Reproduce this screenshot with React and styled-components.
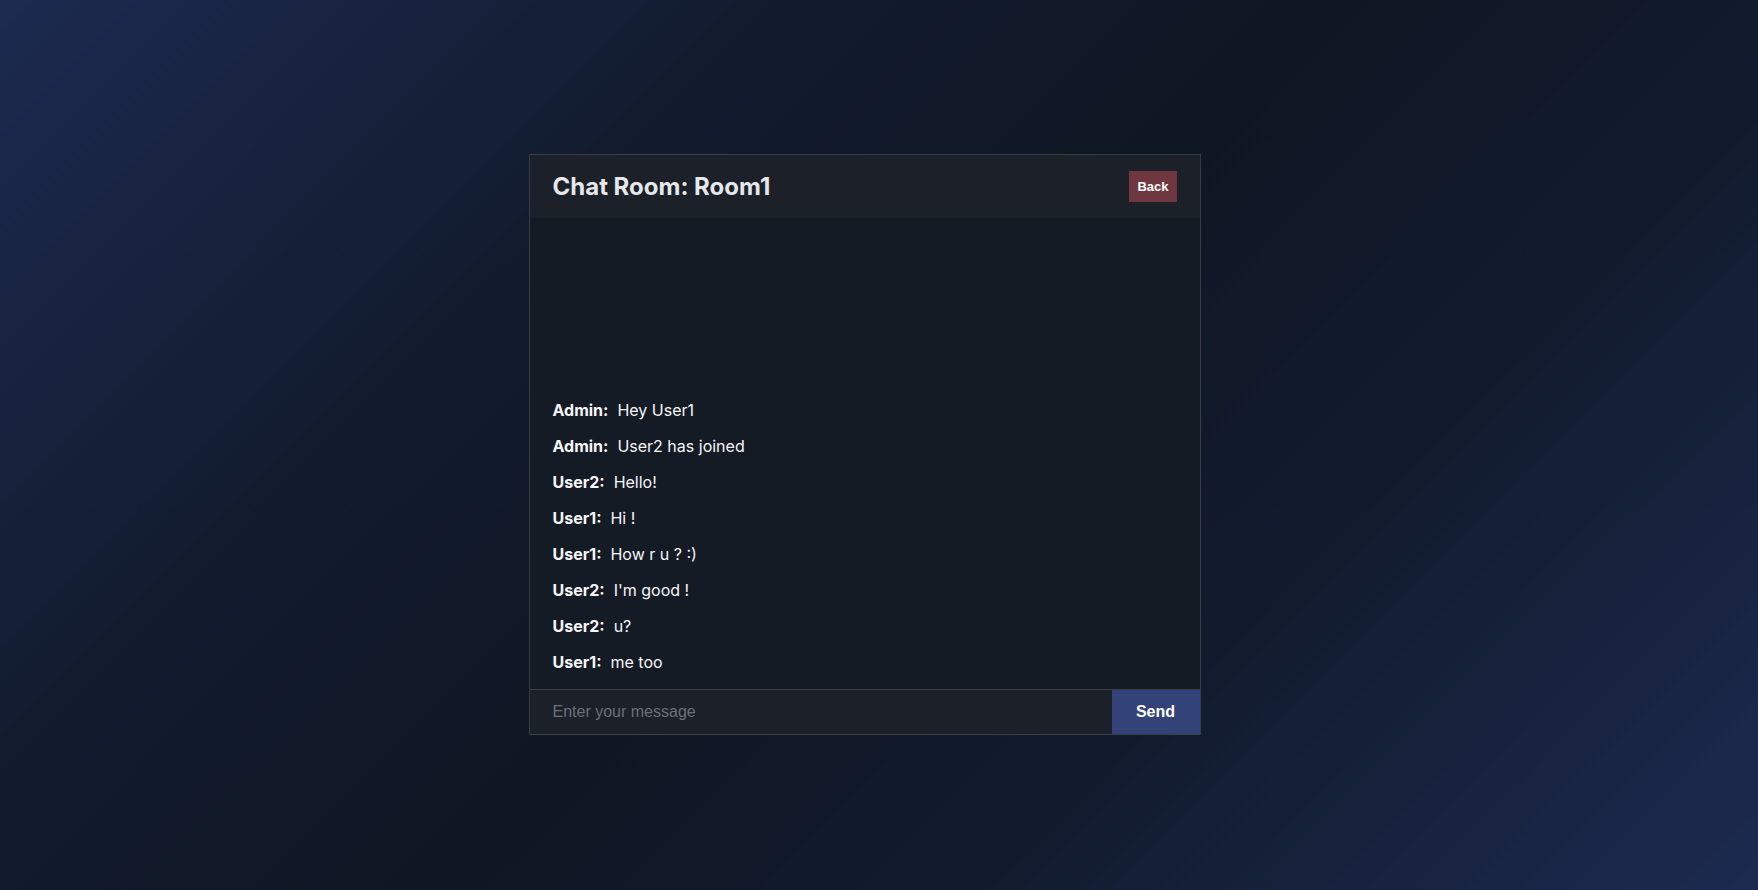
import styled, { createGlobalStyle } from "styled-components";

//------------------------------------------------------------------

const GlobalStyle = createGlobalStyle`
    * {
        box-sizing: border-box;
    }

    body {
        margin: 0;
        font-family: "Inter", "Noto Sans", sans-serif;
        color: #f3f4f6;
    }
`;

const Page = styled.div`
    min-height: 100vh;
    display: flex;
    align-items: flex-start;
    justify-content: center;
    padding: 154px 29px 0 0;

    background: linear-gradient(
        135deg,
        #1c2a50 0%,
        #121b2d 30%,
        #0f1724 50%,
        #121b2d 70%,
        #1c2a50 100%
    );
`;

const Card = styled.div`
    width: 672px;
    height: 581px;
    display: flex;
    flex-direction: column;

    background: #151b25;
    border: 1px solid #373c45;
`;

const Header = styled.div`
    height: 63px;
    flex-shrink: 0;
    display: flex;
    align-items: center;
    justify-content: space-between;
    padding: 0 23px 0 23px;

    background: #1c2029;
`;

const Title = styled.h2`
    margin: 0;
    font-size: 24px;
    font-weight: 700;
    color: #e5e7eb;
`;

const BackBtn = styled.button`
    height: 31px;
    padding: 0 8px;

    border: none;
    background: #6f3840;
    color: #ffffff;

    font-family: "Liberation Sans", Arial, sans-serif;
    font-weight: 700;
    font-size: 13px;
`;

const Messages = styled.div`
    flex: 1;
    display: flex;
    flex-direction: column;
    justify-content: flex-end;
    gap: 12px;
    padding: 0 23px 15px;
`;

const Message = styled.div`
    font-size: 16px;
    line-height: 24px;
    color: #f5f6f8;
`;

const Sender = styled.strong`
    font-weight: 700;
    margin-right: 9px;
`;

const InputRow = styled.form`
    height: 46px;
    flex-shrink: 0;
    display: flex;
    margin: 0 -1px -1px;

    border-top: 1px solid #3b4049;
    border-bottom: 1px solid #3b4049;
    border-left: 1px solid #373c45;
    border-right: 1px solid #373c45;
`;

const Input = styled.input`
    flex: 1;
    padding: 0 23px;

    border: none;
    outline: none;
    background: #1c2029;
    color: #e5e7eb;

    font-family: "Liberation Sans", Arial, sans-serif;
    font-size: 16px;

    &::placeholder {
        color: #6b7079;
    }
`;

const SendBtn = styled.button`
    width: 88px;

    border: none;
    background: #33437a;
    color: #ffffff;

    font-family: "Liberation Sans", Arial, sans-serif;
    font-weight: 700;
    font-size: 16px;
`;

//------------------------------------------------------------------

const MESSAGES = [
    { user: "Admin", text: "Hey User1" },
    { user: "Admin", text: "User2 has joined" },
    { user: "User2", text: "Hello!" },
    { user: "User1", text: "Hi !" },
    { user: "User1", text: "How r u ? :)" },
    { user: "User2", text: "I'm good !" },
    { user: "User2", text: "u?" },
    { user: "User1", text: "me too" },
];

export default function App() {
    return (
        <>
            <GlobalStyle />
            <Page>
                <Card>
                    <Header>
                        <Title>Chat Room: Room1</Title>
                        <BackBtn type="button">Back</BackBtn>
                    </Header>

                    <Messages>
                        {MESSAGES.map((m, i) => (
                            <Message key={i}>
                                <Sender>{m.user}:</Sender>
                                {m.text}
                            </Message>
                        ))}
                    </Messages>

                    <InputRow onSubmit={(e) => e.preventDefault()}>
                        <Input placeholder="Enter your message" />
                        <SendBtn type="submit">Send</SendBtn>
                    </InputRow>
                </Card>
            </Page>
        </>
    );
}
